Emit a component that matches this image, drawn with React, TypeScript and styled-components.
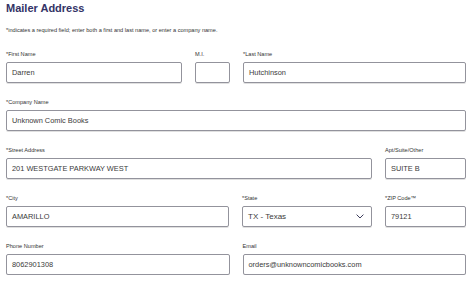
import styled, { createGlobalStyle } from 'styled-components';

const GlobalStyle = createGlobalStyle`
    html, body {
        margin: 0;
        padding: 0;
        background: #ffffff;
    }

    body {
        font-family: 'Liberation Sans', Arial, sans-serif;
    }
`;

const Field = ({ label, value, select }: { label: string; value: string; select?: boolean }) => (
    <StyledField>
        <StyledLabel>{label}</StyledLabel>
        <StyledInput select={select}>
            <span>{value}</span>
            {select && (
                <svg width="8" height="5" viewBox="0 0 8 5">
                    <path d="M0.6 0.6l3.4 3.4 3.4-3.4" fill="none" stroke="#3d3d5c" strokeWidth="1" />
                </svg>
            )}
        </StyledInput>
    </StyledField>
);

const App = () => {
    return (
        <StyledPage>
            <GlobalStyle />
            <StyledTitle>Mailer Address</StyledTitle>
            <StyledNote>
                *indicates a required field; enter both a first and last name, or enter a company name.
            </StyledNote>

            <StyledRow columns="176px 35px 1fr">
                <Field label="*First Name" value="Darren" />
                <Field label="M.I." value="" />
                <Field label="*Last Name" value="Hutchinson" />
            </StyledRow>

            <StyledRow columns="1fr">
                <Field label="*Company Name" value="Unknown Comic Books" />
            </StyledRow>

            <StyledRow columns="1fr 81px">
                <Field label="*Street Address" value="201 WESTGATE PARKWAY WEST" />
                <Field label="Apt/Suite/Other" value="SUITE B" />
            </StyledRow>

            <StyledRow columns="223px 130px 1fr">
                <Field label="*City" value="AMARILLO" />
                <Field label="*State" value="TX - Texas" select />
                <Field label="*ZIP Code™" value="79121" />
            </StyledRow>

            <StyledRow columns="1fr 1fr">
                <Field label="Phone Number" value="8062901308" />
                <Field label="Email" value="orders@unknowncomicbooks.com" />
            </StyledRow>
        </StyledPage>
    );
};

const StyledPage = styled.main`
    width: 460px;
    padding: 2px 8px 0 6px;
`;

const StyledTitle = styled.h2`
    margin: 0;
    font-size: 11px;
    line-height: 13px;
    font-weight: 700;
    color: #333366;
`;

const StyledNote = styled.p`
    margin: 12px 0 0;
    font-size: 5.6px;
    line-height: 7px;
    color: #333333;
`;

const StyledRow = styled.div<{ columns: string }>`
    display: grid;
    grid-template-columns: ${({ columns }) => columns};
    column-gap: 13px;
    margin-top: 17px;

    & + & {
        margin-top: 16px;
    }
`;

const StyledField = styled.div`
    display: flex;
    flex-direction: column;
    min-width: 0;
`;

const StyledLabel = styled.label`
    height: 7px;
    margin-bottom: 4px;
    font-size: 5.6px;
    line-height: 7px;
    color: #333333;
    white-space: nowrap;
`;

const StyledInput = styled.div<{ select?: boolean }>`
    display: flex;
    align-items: center;
    justify-content: space-between;
    box-sizing: border-box;
    height: 21px;
    padding: 0 7px 0 5px;
    border: 1px solid #93939c;
    border-radius: 2px;
    box-shadow: 0 1px 0 rgba(0, 0, 0, 0.12);
    font-size: ${({ select }) => (select ? '8px' : '7.4px')};
    color: #3a3a3a;
    white-space: nowrap;
    overflow: hidden;

    svg {
        flex: none;
    }
`;

export default App;
